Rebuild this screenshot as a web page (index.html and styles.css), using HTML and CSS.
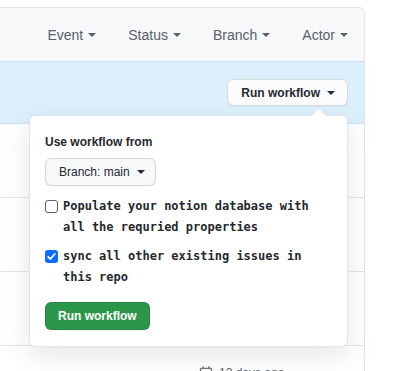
FILE: index.html
```html
<!DOCTYPE html>
<html lang="en">

<head>
  <meta charset="UTF-8">
  <meta name="viewport" content="width=device-width, initial-scale=1.0">
  <title>Actions</title>
  <link rel="stylesheet" href="styles.css">
</head>

<body>
  <div class="page">
    <div class="box">
      <div class="box-header">
        <span class="filter">Event <i class="caret"></i></span>
        <span class="filter">Status <i class="caret"></i></span>
        <span class="filter">Branch <i class="caret"></i></span>
        <span class="filter">Actor <i class="caret"></i></span>
      </div>

      <div class="box-row box-row-blue">
        <div class="run-menu">
          <button class="btn btn-sm">Run workflow <i class="caret"></i></button>

          <div class="popover">
            <p class="popover-title">Use workflow from</p>
            <button class="btn btn-branch">Branch: main <i class="caret"></i></button>

            <label class="check">
              <span class="check-box"></span>
              <span class="check-text">Populate your notion database with all the requried properties</span>
            </label>
            <label class="check">
              <span class="check-box checked">
                <svg width="13" height="13" viewBox="0 0 13 13"><path d="M3.2 6.8l2.2 2.2 4.4-5" stroke="#fff" stroke-width="1.8" fill="none" stroke-linecap="round" stroke-linejoin="round"/></svg>
              </span>
              <span class="check-text">sync all other existing issues in this repo</span>
            </label>

            <button class="btn btn-primary">Run workflow</button>
          </div>
        </div>
      </div>

      <div class="box-row">
        <div class="run-meta"></div>
      </div>
      <div class="box-row">
        <div class="run-meta"></div>
      </div>
      <div class="box-row">
        <div class="run-meta"></div>
      </div>
      <div class="box-row box-row-last">
        <div class="run-meta">
          <svg class="cal" width="14" height="14" viewBox="0 0 16 16"><path fill="#6a737d" fill-rule="evenodd" d="M4.75 0a.75.75 0 01.75.75V2h5V.75a.75.75 0 011.5 0V2h1.25c.966 0 1.75.784 1.75 1.75v10.5A1.75 1.75 0 0113.25 16H2.75A1.75 1.75 0 011 14.25V3.75C1 2.784 1.784 2 2.750 2H4V.75A.75.75 0 014.75 0zm0 3.5h8.5a.25.25 0 01.25.25V6h-11V3.75a.25.25 0 01.25-.25h2zm-2.25 4v6.75c0 .138.112.25.25.25h10.5a.25.25 0 00.25-.25V7.5h-11z"/></svg>
          <span>12 days ago</span>
        </div>
      </div>
    </div>
  </div>
</body>

</html>
```

FILE: styles.css
```css
* {
  box-sizing: border-box;
}

body {
  margin: 0;
  background-color: #fff;
  font-family: "Liberation Sans", Helvetica, Arial, sans-serif;
  color: #24292e;
  overflow: hidden;
}

.page {
  padding-top: 7px;
}

.box {
  width: 381px;
  margin-left: -16px;
  border: 1px solid #e1e4e8;
  border-bottom: none;
  border-top-right-radius: 6px;
}

.box-header {
  height: 54px;
  display: flex;
  align-items: center;
  justify-content: flex-end;
  gap: 32px;
  padding-right: 16px;
  background-color: #f6f8fa;
  border-bottom: 1px solid #c8e1ff;
  border-top-right-radius: 6px;
}

.filter {
  display: flex;
  align-items: center;
  font-size: 14px;
  color: #586069;
}

.caret {
  display: inline-block;
  width: 0;
  height: 0;
  margin-left: 5px;
  border-top: 4px solid;
  border-left: 4px solid transparent;
  border-right: 4px solid transparent;
}

.box-row {
  height: 74px;
  display: flex;
  justify-content: flex-end;
  padding: 20px 16px 0;
  border-bottom: 1px solid #e1e4e8;
}

.box-row-blue {
  height: 62px;
  padding: 0 16px;
  align-items: center;
  background-color: #dbf0fc;
  border-bottom-color: #c8e1ff;
}

.box-row-last {
  border-bottom: none;
}

.run-meta {
  width: 149px;
  display: flex;
  align-items: flex-start;
  gap: 6px;
  font-size: 12px;
  color: #586069;
}

.run-menu {
  position: relative;
}

.btn {
  display: inline-flex;
  align-items: center;
  font-family: inherit;
  font-size: 12px;
  color: #24292e;
  background-color: #fafbfc;
  border: 1px solid rgba(27, 31, 35, 0.15);
  border-radius: 6px;
  box-shadow: 0 1px 0 rgba(27, 31, 35, 0.04);
  cursor: pointer;
}

.btn-sm {
  height: 27px;
  padding: 0 12px 0 13px;
  font-weight: bold;
}

.btn-sm .caret {
  margin-left: 7px;
}

.popover {
  position: absolute;
  top: calc(100% + 9px);
  right: 0;
  width: 319px;
  padding: 17px 15px 16px;
  background-color: #fff;
  border: 1px solid #e1e4e8;
  border-radius: 6px;
  box-shadow: 0 8px 24px rgba(149, 157, 165, 0.25);
  z-index: 10;
}

.popover:before,
.popover:after {
  content: "";
  position: absolute;
  right: 20px;
  width: 0;
  height: 0;
  border-left: 8px solid transparent;
  border-right: 8px solid transparent;
}

.popover:before {
  top: -8px;
  border-bottom: 8px solid #e1e4e8;
}

.popover:after {
  top: -7px;
  border-bottom: 8px solid #fff;
}

.popover-title {
  margin: 0 0 7px;
  font-size: 12px;
  line-height: 18px;
  font-weight: bold;
}

.btn-branch {
  height: 28px;
  padding: 0 10px 0 13px;
  background-color: #f6f8fa;
}

.btn-branch .caret {
  margin-left: 7px;
}

.check {
  display: flex;
  align-items: flex-start;
  gap: 5px;
  margin-top: 8px;
  font-family: "DejaVu Sans Mono", "Liberation Mono", monospace;
  font-size: 12px;
  line-height: 21px;
  font-weight: bold;
  color: #24292e;
}

.btn-branch + .check {
  margin-top: 10px;
}

.check-box {
  flex: none;
  width: 13px;
  height: 13px;
  margin-top: 4px;
  border: 1.5px solid #586069;
  border-radius: 3px;
  background-color: #fff;
}

.check-box.checked {
  border: none;
  background-color: #0b6cff;
}

.check-box svg {
  display: block;
}

.btn-primary {
  height: 28px;
  margin-top: 14px;
  padding: 0 12px;
  font-weight: bold;
  color: #fff;
  background-color: #2c974b;
  border-color: rgba(27, 31, 35, 0.15);
}
```
